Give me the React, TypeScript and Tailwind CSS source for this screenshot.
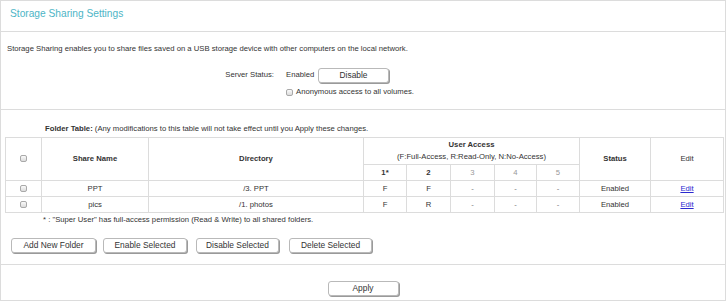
import type { ReactNode } from "react";

function Box() {
	return (
		<span className="inline-block h-[7px] w-[7px] rounded-[2px] border border-[#a9a9a9] bg-gradient-to-b from-[#fafafa] to-[#dcdcdc] align-middle" />
	);
}

function Btn({ children, className = "" }: { children: ReactNode; className?: string }) {
	return (
		<button
			type="button"
			className={`h-[15px] rounded-[3px] border border-[#b9b9b9] bg-white text-[8.4px] leading-none text-[#333] shadow-[1px_1px_0_#9a9a9a] ${className}`}
		>
			{children}
		</button>
	);
}

const rows = [
	{ name: "PPT", dir: "/3. PPT", access: ["F", "F", "-", "-", "-"] },
	{ name: "pics", dir: "/1. photos", access: ["F", "R", "-", "-", "-"] },
];

const cell = "border border-[#dcdcdc] text-center align-middle";

export default function App() {
	return (
		<div className="h-[301px] w-[726px] border border-[#dcdcdc] bg-white font-['Liberation_Sans',Arial,sans-serif] text-[7.7px] leading-[10px] text-[#333]">
			<div className="flex h-[31px] items-center border-b border-[#dcdcdc] pb-[4px] pl-[9px] text-[10.2px] text-[#4db5c6]">
				Storage Sharing Settings
			</div>

			<div className="h-[78px] border-b border-[#dcdcdc] pt-[12px]">
				<p className="pl-[6px]">
					Storage Sharing enables you to share files saved on a USB storage device with other computers on the local network.
				</p>
				<div className="mt-[14px] flex h-[14px] items-center">
					<span className="w-[273px] text-right">Server Status:</span>
					<span className="ml-[12px] w-[32px]">Enabled</span>
					<Btn className="h-[14px] w-[71px]">Disable</Btn>
				</div>
				<div className="mt-[5px] flex h-[10px] items-center pl-[285px]">
					<Box />
					<span className="ml-[3px]">Anonymous access to all volumes.</span>
				</div>
			</div>

			<div className="h-[155px] border-b border-[#dcdcdc] pt-[14px]">
				<p className="pl-[44px]">
					<span className="font-bold">Folder Table:</span> (Any modifications to this table will not take effect until you Apply these changes.
				</p>
				<table className="ml-[4px] mt-[3px] w-[718px] table-fixed border-collapse">
					<colgroup>
						<col className="w-[36px]" />
						<col className="w-[107px]" />
						<col className="w-[215px]" />
						<col className="w-[43px]" />
						<col className="w-[44px]" />
						<col className="w-[44px]" />
						<col className="w-[42px]" />
						<col className="w-[43px]" />
						<col className="w-[71px]" />
						<col className="w-[73px]" />
					</colgroup>
					<thead>
						<tr className="h-[27px]">
							<th rowSpan={2} className={cell}>
								<Box />
							</th>
							<th rowSpan={2} className={`${cell} font-bold`}>Share Name</th>
							<th rowSpan={2} className={`${cell} font-bold`}>Directory</th>
							<th colSpan={5} className={`${cell} font-normal`}>
								<div className="font-bold">User Access</div>
								<div className="mt-[2px]">(F:Full-Access, R:Read-Only, N:No-Access)</div>
							</th>
							<th rowSpan={2} className={`${cell} font-bold`}>Status</th>
							<th rowSpan={2} className={`${cell} font-normal`}>Edit</th>
						</tr>
						<tr className="h-[16px]">
							<th className={`${cell} font-bold`}>1*</th>
							<th className={`${cell} font-bold`}>2</th>
							<th className={`${cell} font-normal text-[#999]`}>3</th>
							<th className={`${cell} font-normal text-[#999]`}>4</th>
							<th className={`${cell} font-normal text-[#999]`}>5</th>
						</tr>
					</thead>
					<tbody>
						{rows.map((r) => (
							<tr key={r.name} className="h-[16px]">
								<td className={cell}>
									<Box />
								</td>
								<td className={cell}>{r.name}</td>
								<td className={cell}>{r.dir}</td>
								{r.access.map((a, i) => (
									<td key={i} className={`${cell} ${a === "-" ? "text-[#777]" : ""}`}>
										{a}
									</td>
								))}
								<td className={cell}>Enabled</td>
								<td className={cell}>
									<a href="#" className="text-[#2a2ad0] underline">
										Edit
									</a>
								</td>
							</tr>
						))}
					</tbody>
				</table>
				<p className="mt-[2px] pl-[42px]">* : "Super User" has full-access permission (Read &amp; Write) to all shared folders.</p>
				<div className="mt-[13px] flex pl-[10px]">
					<Btn className="w-[85px]">Add New Folder</Btn>
					<Btn className="ml-[7px] w-[84px]">Enable Selected</Btn>
					<Btn className="ml-[9px] w-[83px]">Disable Selected</Btn>
					<Btn className="ml-[10px] w-[83px]">Delete Selected</Btn>
				</div>
			</div>

			<div className="flex justify-center pt-[16px]">
				<Btn className="h-[14px] w-[71px]">Apply</Btn>
			</div>
		</div>
	);
}
